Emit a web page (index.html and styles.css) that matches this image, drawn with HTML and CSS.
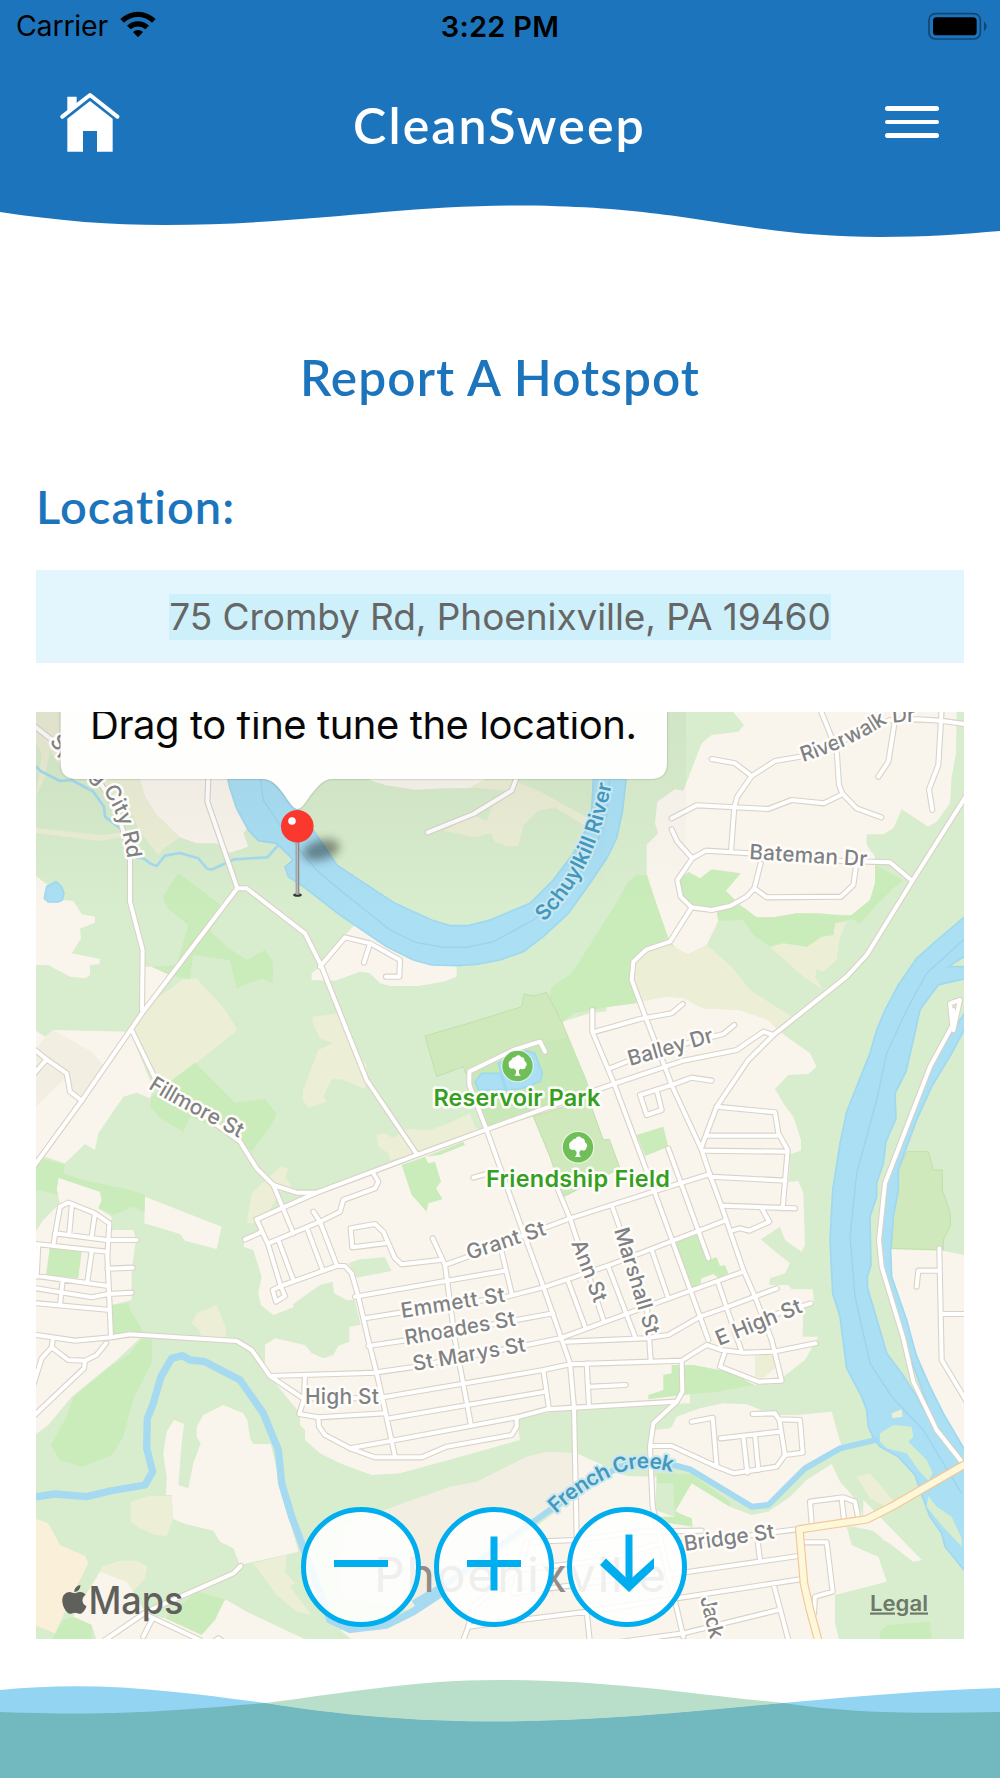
FILE: index.html
```html
<!DOCTYPE html>
<html lang="en">
<head>
<meta charset="utf-8">
<title>CleanSweep</title>
<link rel="stylesheet" href="styles.css">
</head>
<body>
<header class="header">
  <svg class="header-wave" viewBox="0 0 1000 240" aria-hidden="true"><path d="M0 0H1000V231C965 234 925 237 880 237C740 237 690 205.5 515 205.5C400 205.5 300 225 165 225C110 225 60 221 0 212Z"/></svg>
  <div class="header-content">
    <div class="status">
      <div class="status-left"><span class="carrier">Carrier</span>
        <svg class="wifi" width="38" height="28" viewBox="0 0 114 84"><path d="M4 24A76 76 0 0 1 110 24L99 35A60 60 0 0 0 15 35ZM24 44A48 48 0 0 1 90 44L79 55A32 32 0 0 0 35 55ZM42 63A22 22 0 0 1 72 63L57 79Z"/></svg>
      </div>
      <span class="time">3:22 PM</span>
      <svg class="battery" width="60" height="28" viewBox="0 0 180 84"><rect x="6" y="5" width="154" height="76" rx="19" fill="none" stroke="#12466f" stroke-width="5"/><rect x="18" y="16" width="131" height="54" rx="11"/><path d="M171 28Q187 43 171 58Z" fill="#12466f"/></svg>
    </div>
    <nav class="nav">
      <svg class="home" width="60" height="62" viewBox="0 0 180 186"><path d="M22 83L90 30L158 83V182H111V120H69V182H22Z"/><path d="M22 17H50V38L22 62Z"/><path d="M7 77L90 12L172 77" fill="none" stroke="#fff" stroke-width="12" stroke-linecap="round" stroke-linejoin="round"/></svg>
      <h1 class="brand">CleanSweep</h1>
      <div class="menu"><i></i><i></i><i></i></div>
    </nav>
  </div>
</header>
<main class="main">
  <h2 class="title">Report A Hotspot</h2>
  <h3 class="label">Location:</h3>
  <div class="address"><span class="selected">75 Cromby Rd, Phoenixville, PA 19460</span></div>
  <section class="map">
  <svg class="map-canvas" viewBox="36 712 928 927">
    <defs>
      <linearGradient id="shade" x1="0" y1="0" x2="0" y2="1"><stop offset="0" stop-opacity=".055"/><stop offset="1" stop-opacity="0"/></linearGradient>
      <filter id="soft" x="-50%" y="-50%" width="200%" height="200%"><feGaussianBlur stdDeviation="5"/></filter>
      <filter id="edge" x="-10%" y="-30%" width="120%" height="160%"><feGaussianBlur stdDeviation="1.2"/></filter>
      <g id="tree"><circle r="16.3" fill="#fff" opacity=".6"/><circle r="15.2" fill="#6fbe57"/><path fill="#fff" d="M-3.6 9.8C-1.8 8.9-1.5 8-1.4 4.5L-3.8 2.2C-6 3.6-9.4 1.6-8.6-1C-9.8-4-7-6-6-6C-5.5-8.5-3.2-9-2.3-8.5C-1.5-11.5 2.5-11.5 3.6-9C6.5-9 7.2-6.5 6.8-5C9.6-4 9.8-.6 8.2.6C8.2 3.4 4.5 4 3.2 2.4L1.4 4.6C1.5 8 1.8 8.9 3.8 9.8Z"/></g>
      <g id="roads">
        <g transform="translate(30 700) scale(.33333)">
          <path d="M535 200V236L532 305L622 565H650L825 700L875 800L950 990L1010 1140L1160 1362M0 68L60 115L200 230L260 330L300 460V605L338 750L336 930M622 565L336 940L155 1202L0 1415M870 800L945 712L1020 730L1110 780L1108 830H1068M1020 730L1002 788"/>
          <path d="M1193 397L1330 342L1445 272L1465 220"/>
        </g>
        <g transform="translate(640 700) scale(.33333)">
          <path d="M215 177L285 190L335 228M480 170L405 183L335 228L292 290L283 320L273 455M480 170L590 130L750 60L830 58L903 62L980 73M95 355L170 316L385 327L455 300L552 310L608 282M540 26L590 150L597 255L608 282L650 325L724 352M95 388L112 425L157 475L197 452L330 460L500 480L750 487L817 543M157 475L112 540L122 590L155 622L90 725L20 748L-20 785L-25 840L18 955L75 1102L95 1155L185 1350L210 1425L245 1520L310 1710L345 1790L395 1920"/>
          <path d="M155 622L215 630L270 618L320 590L343 565L380 592L603 590L640 555L648 500M343 565L362 490M980 285L817 543L680 765L620 830L400 1005L325 1080L230 1220L185 1340M905 26L895 195L867 268L877 330M765 60L745 185L715 230M-143 930V995L-80 1145L45 1480L180 1850L205 1920M-135 995L0 957L95 940L128 912M938 985L930 910L960 900L940 990"/>
        </g>
        <g transform="translate(30 1010) scale(.33333)">
          <path d="M0 108L50 148L110 190L120 245L155 272M50 148L0 205M305 60L380 215L630 395L680 475L730 525L757 590L790 670M730 525L800 548H860M680 628L715 705L752 828M715 700L870 635L930 605L940 570L1035 535L1045 515L1030 490M850 605L870 635L920 765M745 690L790 810M833 660L878 780M752 828L920 768H945L965 790L985 860L1015 990M752 828L765 858L738 875L728 840ZM962 655L967 712L1065 700M962 655L1035 642L1060 665L1095 745L1115 763L1230 750"/>
          <path d="M70 705L90 590L115 578L195 610L238 640L232 740L243 980M125 590L118 670M195 610L185 680M75 670L230 690H320M0 700L230 725M25 705L20 800M185 725L172 815M0 795L235 828M98 810L90 885M0 832L185 862L235 852L305 848M232 776L308 773M0 878L240 900"/>
        </g>
        <g transform="translate(340 1010) scale(.33333)">
          <path d="M-285 688L-240 668M-250 628L-70 548L0 522L230 435L440 358L820 222L1030 152L1190 120L1270 65L1300 75M615 125L600 95L520 120L388 185V225L440 360L540 640L610 830L690 1060L702 1193L710 1580M810 175L860 155L1000 110L1150 72L1183 45M278 685L315 765L345 990L392 1240M315 765L370 745L690 625L940 545L1110 492M650 530L690 625L790 930M685 815L735 950M400 503L445 490M815 585L870 740L920 880L932 1050M805 770L885 980M485 725L515 850"/>
          <path d="M45 860L495 782M75 925L180 908L500 860L610 832L810 765L1155 632M85 1008L190 992L640 910M110 1087L215 1072L560 1005L660 985L960 875L1210 785M680 995L915 985L985 975L1080 920L1165 890L1310 835M130 1162L610 1080L690 1063L1025 1052L1100 1005L1145 1020L1210 1028L1300 1025L1427 1000M150 1225L615 1145M30 1315L155 1292L530 1222L620 1198L702 1193L1005 1175M610 1080L627 1198M740 1060L747 1188M750 1130L857 1125M85 990L110 1090L135 1200L165 1340"/>
        </g>
        <g transform="translate(640 1010) scale(.33333)">
          <path d="M230 290L405 307L415 370L443 420L428 595M200 377H415M190 422L443 425M210 500L437 512M245 587L465 595M365 595L388 635L328 662L300 655L275 662M85 415L205 745M95 225L0 255L20 315L65 300L50 240M95 225L155 203L215 212M35 720L85 865M235 820L305 1025M395 990L425 1112L355 1115L240 1070L255 1025M400 915L512 880"/>
          <path d="M898 715L905 1050L980 1175M905 912H980M898 782H835L830 830M940 0L938 45L870 170L735 520L717 690L725 770L790 985L820 1115L890 1260L965 1355"/>
        </g>
        <g transform="translate(30 1310) scale(.33333)">
          <path d="M0 72L135 92L243 82L300 73L620 93L665 120L720 198L815 262M720 198L1040 188M68 92L65 112L115 150L165 152L200 135L228 100M165 152L162 175L0 328M65 112L35 145L10 225M825 198L822 265L808 312L865 322L1065 310M865 322L867 350L885 375L960 415L1035 442H1175L1250 410L1445 375L1460 350V325M822 265H1060M225 990L350 905L610 790L632 768M350 915L510 990M365 930L340 980M545 1000L565 985L585 1000"/>
        </g>
        <g transform="translate(640 1310) scale(.33333)">
          <path d="M125 153L127 245L110 275L40 340L30 410L38 590L130 980M30 408H95L230 470L282 490L410 470L435 435L418 330L405 310L338 312M418 328L480 330L488 428L435 435M155 335L218 323L230 470M242 385L418 365M310 380L322 488M345 375L355 480"/>
          <path d="M-320 695L-190 690L0 665L185 662M130 700L300 680L470 658M350 670L360 750M80 795L475 738M-515 950L-160 905L110 865L480 808M400 820L445 990M-90 1000L130 970L415 900M490 697H560L578 845L525 860L522 910M515 640L510 575L610 562L645 575L655 625M605 565L612 630M-530 990L-515 950L-500 890L-370 780L-100 750L60 700M-160 905L-150 1000M195 860L205 940M-340 695L-380 850L60 790"/>
        </g>
      </g>
      <path id="p-spring" d="M49 742L58 752C84 770 103 784 115 812Q123 828 127 856L128 880"/>
      <path id="p-schuyl" d="M544 922Q592 875 608 800Q614 780 615 755"/>
      <path id="p-river" d="M803 762Q850 747 884 725Q900 720 935 723"/>
      <path id="p-fill" d="M148 1088Q165 1099 188 1111L250 1144"/>
      <path id="p-french" d="M556 1514Q590 1482 628 1470Q650 1464 690 1477"/>
    </defs>

    <rect x="36" y="712" width="928" height="927" fill="#d8edcd"/>
    <!-- built-up land -->
    <g class="land">
      <g transform="translate(30 700) scale(.33333)">
        <path d="M330 240V30H590V240L615 320L655 380L640 400L655 440L600 458L560 430H500L450 412L380 345L345 290ZM0 515L45 548L100 600L130 603L155 643L195 650V668L150 686L153 715L125 760L210 777L208 793L180 795V825L165 835L120 830L55 795H0Z"/>
        <path d="M1020 36H1460L1375 244L1325 264L1240 265L1155 269L1065 255L1020 240ZM845 820L870 800L945 705L980 670L1070 740L1150 780L1205 795L1280 797V830L1240 845L1165 858H1080L1050 850L1020 820L990 815L915 842L845 840ZM345 800H365L420 825L345 925Z"/>
      </g>
      <path transform="translate(640 700) scale(.33333)" d="M275 30L312 75L295 95L215 105L185 130L130 272L105 268L52 305L45 370L55 400L20 435V520L50 620L85 715L115 755L145 762L200 735L235 662L230 640L300 615L350 652H400L470 640L635 645L690 600L705 550V470L680 435V403H730L760 385L785 328L865 380L890 365L930 310L935 230L948 160L950 30Z"/>
      <g transform="translate(30 1010) scale(.33333)">
        <path d="M0 50L45 80L70 60L300 65L370 235L360 265L320 248L280 260L205 370L195 420L165 402L105 460L45 440L0 470ZM85 503L210 545L215 570L205 595L245 620L240 660H310L318 690L305 780V870L245 885L245 980L330 985L260 1050L125 1160L55 1245L0 1285V690L40 630L90 580L80 540ZM345 560L575 650L560 717L465 692L450 672L343 640Z"/>
        <path d="M680 625L860 555L990 505L1100 500V1000L1000 940L990 870L950 870L912 850L908 815L870 825L790 882V892L730 915L693 885L685 850L695 800L670 720L640 710L645 690L690 665Z"/>
      </g>
      <path transform="translate(340 1010) scale(.33333)" d="M0 525L230 435L440 360L580 320L740 250V215L665 35L750 10L830 0L900 -40H1050V1180L700 1195L530 1225L540 1290L380 1335L180 1390L95 1395L0 1360L-60 1330L-105 1290V1260L-120 1245V1210L-210 1100L-225 1095V1005L-195 985L-105 1005L-85 1030L-50 1045L-20 1035L-5 1008L28 995V950L62 945L45 870L0 860Z"/>
      <g transform="translate(640 1010) scale(.33333)">
        <path d="M-100 -25L0 -30L80 -40L130 -35L190 -5L300 0L385 30L410 55L440 80L510 130L530 170L505 192L445 195L405 237L430 280L460 320L483 390V422L450 432L447 515L475 513L490 550L495 705L485 725L435 690L420 650L362 688L400 720L450 760L435 790L390 805L388 825L445 825L455 838H518L522 880L490 885L488 980H535L495 1050L430 1100L345 1125L240 1080L130 1060L95 1065V1090L70 1095V1140L25 1155V1180L-100 1182Z"/>
        <path d="M752 718L910 722L980 737V1330L910 1210L870 1130L815 990L755 800Z"/>
      </g>
      <g transform="translate(30 1310) scale(.33333)">
        <path d="M500 350L520 315L580 285L640 310L652 330L660 385L670 402H722L755 540L805 725L630 765L610 715L570 695L550 662L460 640L425 625V555H408L410 500L400 430L410 365L432 330L462 342L455 400L445 525L475 535L490 460L512 400L500 380ZM210 785L290 805L310 845L345 905L400 925L590 870L650 905L830 990H200L185 945L130 920L170 850Z"/>
      </g>
      <g transform="translate(640 1310) scale(.33333)">
        <path fill="#f2efe2" d="M-740 590L-570 530L-490 515L-340 440L-280 425L-185 430V560L-300 620L-600 850L-700 900L-900 860L-890 650Z"/>
        <path d="M-900 960L-680 915L-560 830L-190 560V430L-40 498L50 500L45 600L160 640L105 600L155 520L270 590L335 615L385 605L450 560L500 510L575 462L600 515L640 560L670 620L705 660L730 690L845 750L820 755L715 665L640 650H620L635 705L690 730L715 740L740 815L585 855V940L600 1000H-850Z"/>
        <path d="M95 350L110 320L180 295L250 280L320 283L400 315L470 315L575 305L605 410L495 475L440 530L385 585H335L150 478L30 440V400L45 360L90 355ZM670 570L700 600L845 750L820 755L670 640Z"/>
      </g>
    </g>
    <path fill="#f2efe2" transform="translate(30 1010) scale(.33333)" d="M70 60L185 125L220 165L150 270L100 210L18 290V120L45 80Z"/>
    <!-- fields -->
    <g class="field">
      <path transform="translate(30 700) scale(.33333)" d="M0 36H90V200L60 150L45 230L18 290L35 160L0 100ZM130 36H330V240L345 290L380 345L450 412L395 450L385 465L330 395L300 330L200 240ZM0 383L210 405L275 398V410L210 423L0 397ZM340 925L460 838L500 835L530 870L570 910L595 945L622 990L500 1088L420 1145L380 1150L305 985Z"/>
      <path transform="translate(340 700) scale(.33333)" d="M520 36V240L610 280L750 358L740 380L645 322L595 332L550 375L535 438H500L465 425L452 400L405 412L310 392L400 345L440 362L460 310L500 272L390 262L450 230Z"/>
      <path transform="translate(640 700) scale(.33333)" d="M-20 785L20 750L90 735L145 762L200 735L275 800L330 870L455 950L410 985L385 960L300 930L190 925L130 895L80 890L0 905L-10 910L-25 840ZM390 740L415 725L500 740L545 710L580 705L585 670L620 665L600 710L590 780L550 815L530 808L525 830L550 870L490 830Z"/>
      <path transform="translate(30 1010) scale(.33333)" d="M665 550L685 530L755 468L775 478L765 500L785 530L750 545L720 600L670 640H650ZM485 940L500 910L560 885L590 960L585 985H515L508 960ZM848 20L930 10L990 140L1010 165L1005 238L935 208H905L880 260L890 275L835 293L818 270L820 240L865 120L910 100L870 85L848 40Z"/>
      <path transform="translate(340 1010) scale(.33333)" d="M110 375L130 368L160 385L200 358L270 360L325 340L390 310L405 350L420 360L235 430L150 450L145 430L115 410Z"/>
      <path transform="translate(30 1310) scale(.33333)" d="M302 575L360 557L425 558L430 625L410 678L375 675L330 655L302 635ZM215 770L270 752H320L352 768L345 805L310 845L290 815L210 785ZM670 760L770 735L765 785L795 820L780 830L845 915L800 905L740 855Z"/>
      <path fill="#faf0da" transform="translate(30 1310) scale(.33333)" d="M0 620L55 640L90 705L165 738L175 760L130 850L75 970L0 940Z"/>
      <path transform="translate(640 1310) scale(.33333)" d="M650 500L690 490L775 590L745 595L690 565ZM345 135L395 130L410 170L370 205L345 200Z"/>
    </g>
    <!-- woods and parks -->
    <g class="wood">
      <path transform="translate(30 700) scale(.33333)" d="M445 520L585 625L540 692L590 740L650 780L705 750L728 785V850L695 835L620 865L600 780L490 765L480 838L420 825L365 800L440 795L475 675L415 628L398 590Z"/>
      <path transform="translate(340 700) scale(.33333)" d="M825 615L865 545L890 525H920L985 715L915 745L880 785L875 840L890 910L810 920L700 940L665 970L630 890L635 860L695 820L740 750Z"/>
      <path transform="translate(640 700) scale(.33333)" d="M145 515L180 535L215 508L302 520L258 572L300 615L215 628L160 620L118 580L112 545ZM300 615L350 652H400L470 640L540 640L600 648L635 645L690 600L705 550V495L790 540L765 560L715 610L660 670L635 657L585 670L580 705L545 710L500 740L430 730L390 740L340 705L310 660L235 662L230 635Z"/>
      <path transform="translate(30 1010) scale(.33333)" d="M420 215L495 158L615 278L705 267L740 312L720 350L665 425L620 380L480 320L460 365L390 325L360 290L365 260ZM60 710L155 725L145 805L48 795ZM0 435L105 465L100 490L160 510L300 540L345 555L343 605L310 590L250 615L205 595L215 570L210 545L85 503L80 540L85 555L0 535ZM245 885L295 880L300 900L340 965L245 980Z"/>
      <path transform="translate(340 1010) scale(.33333)" d="M185 465L255 440L265 460L285 455L303 515L288 535L308 568L265 580L260 605L215 555ZM255 440L370 395L375 405L300 435ZM890 375L970 350L985 410L915 438ZM1005 695L1070 675L1105 750L1130 742L1140 768L1155 765L1165 790L1135 805L1120 792L1085 805L1080 825L1055 832Z"/>
      <path fill="#d8edcd" transform="translate(340 1010) scale(.33333)" d="M25 760L60 748L135 742L155 783L50 803Z"/>
      <path transform="translate(30 1310) scale(.33333)" d="M335 88H365V160L310 265L280 380L245 435L155 470L90 450L62 405L110 320L130 262L240 170L300 130ZM405 925L500 845L585 868L555 930L515 975ZM130 920L185 945V1000H60L100 930Z"/>
      <path transform="translate(640 1310) scale(.33333)" d="M95 165L160 165L280 190L340 225L230 245L130 255L25 268V255L70 240V195L95 190ZM50 490L155 492L270 575V590L155 520L105 605L155 625L158 650L60 635L55 620H105L100 520H50ZM720 965L740 945L870 935L875 1000H720Z"/>
    </g>
    <g class="park">
      <path transform="translate(340 1010) scale(.33333)" d="M255 78L385 40L545 -10L553 -48L580 -42L620 -53L665 35L740 215L750 255L440 358L370 170L290 200Z"/>
      <path transform="translate(340 1010) scale(.33333)" d="M580 320L745 265L790 390L808 388L840 475L670 560L630 440Z"/>
      <path transform="translate(640 1010) scale(.33333)" d="M800 425H865L880 480H907V540L930 605L932 645L910 690V720L755 715L760 620L775 540V480Z"/>
    </g>
    <path transform="translate(340 1010) scale(.33333)" fill="#c9e8b7" d="M600 100L685 80L740 215L750 255L440 358L390 225L390 190Z"/>
    <!-- water -->
    <g class="water">
      <path transform="translate(30 700) scale(.33333)" d="M580 36L595 240L600 265L622 330L655 390L685 422L740 430L790 480L765 500L775 530L820 560L930 645L1070 740L1150 780L1205 795L1280 797L1340 793L1410 780L1480 755L1540 710L1615 640L1680 550L1730 475L1760 415L1778 330L1788 240L1800 36H1705L1690 240L1685 330L1670 385L1630 460L1570 540L1500 610L1380 660L1315 677H1260L1205 660L1095 610L920 495L870 420L800 320L720 240L660 36ZM78 545L95 560L102 580L97 600L85 606H55L43 595L50 560Z"/>
      <path transform="translate(340 1010) scale(.33333)" d="M405 215L425 190H480L495 240H415ZM475 160L560 122L585 130L607 190L600 215L545 235L500 240Z"/>
      <path transform="translate(640 1010) scale(.33333)" d="M980 -285L880 -200L830 -155L775 -75L735 0L710 60L690 130L620 305L600 400L578 540L570 690L578 850L600 920L605 960L620 1075L665 1160L680 1200L685 1250L700 1285L720 1310L775 1340L825 1395L845 1455L870 1520L905 1570L915 1610L980 1690V1340L880 1250L830 1160L785 1090L740 1030L720 960L683 835L682 800L693 765L690 620L710 560V520L730 460L738 395L768 325L765 250L798 185L820 90L840 0L850 -15L895 -75L980 -95V-130L925 -130L980 -165Z"/>
      <path transform="translate(640 1010) scale(.33333)" d="M980 0L940 60L870 170L740 520L722 690L730 780L790 985L890 1260L980 1365V1330L910 1210L870 1130L830 1040L812 975L800 930L755 800L752 720L760 620L775 540V480L800 410L830 330L875 230L935 130L980 45Z"/>
      <path class="creek creek-thin" transform="translate(30 700) scale(.33333)" d="M0 185L35 215L90 243L125 240L190 275L222 320L225 350L275 388L310 470L340 475L365 493L380 498L405 467L450 459L505 475L532 507L548 508L612 478L712 472L745 435"/>
      <path class="creek creek-wide" transform="translate(30 1310) scale(.33333)" d="M0 563L75 552L170 560L240 543L345 525L368 485L350 415L352 325L370 280L393 200L425 145L458 137L480 150L525 155L630 210L700 310L745 420L755 520L785 620L830 740L900 930L960 958L1070 945L1150 905L1250 840"/>
      <path class="creek creek-mid" transform="translate(640 1310) scale(.33333)" d="M-680 880L-580 820L-270 600L-150 520L-60 470L0 455L100 465L150 478L335 590L385 585L440 530L495 475L600 415L715 388"/>
    </g>
    <g fill="none" stroke="#9bd3ec" stroke-width="3.5">
      <path transform="translate(30 700) scale(.33333)" d="M665 40L700 300L760 390L860 510L930 570L1080 690L1160 728L1240 742H1310L1390 725L1510 660L1600 590L1690 460L1730 350L1750 100"/>
      <path transform="translate(640 1010) scale(.33333)" d="M970 -210L860 -110L800 0L740 130L710 270L650 490L630 680L645 860L690 1060L755 1160L850 1260L965 1450"/>
    </g>
    <path fill="#d8edcd" transform="translate(640 1310) scale(.33333)" d="M720 370L760 345L815 350L820 380L805 395L840 430L860 450L878 490L865 512L835 480L800 430L740 415L720 395ZM865 558L890 590L935 620L965 685V710L900 640L860 590Z"/>
    <path class="field" transform="translate(640 1310) scale(.33333)" d="M755 310L785 298L788 320L757 325Z"/>
    <!-- roads -->
    <use href="#roads" class="casing"/><use href="#roads" class="road"/>
    <g transform="translate(640 1310) scale(.33333)" fill="none" stroke-linejoin="round"><path d="M540 1010L510 900L492 820L478 658L680 628L755 590L980 460" stroke="#f3c898" stroke-width="26"/><path d="M540 1010L510 900L492 820L478 658L680 628L755 590L980 460" stroke="#fdf8d9" stroke-width="19"/></g>
    <rect x="36" y="712" width="570" height="200" fill="url(#shade)"/>
    <rect x="606" y="712" width="80" height="200" fill="url(#shade)" opacity=".6"/>
    <!-- labels -->
    <g class="street">
      <text><textPath href="#p-spring" textLength="146">Spring City Rd</textPath></text>
      <text><textPath href="#p-river" textLength="121">Riverwalk Dr</textPath></text>
      <text><textPath href="#p-fill" textLength="104">Fillmore St</textPath></text>
      <text transform="translate(749 859) rotate(3.5)" textLength="118">Bateman Dr</text>
      <text transform="translate(630 1066) rotate(-16)" textLength="88">Balley Dr</text>
      <text transform="translate(469 1260) rotate(-18)" textLength="82">Grant St</text>
      <text transform="translate(571 1243) rotate(69)" textLength="65">Ann St</text>
      <text transform="translate(614 1230) rotate(73)" textLength="111">Marshall St</text>
      <text transform="translate(402 1318) rotate(-9)" textLength="105">Emmett St</text>
      <text transform="translate(406 1345) rotate(-10)" textLength="112">Rhoades St</text>
      <text transform="translate(414 1371) rotate(-10)" textLength="114">St Marys St</text>
      <text transform="translate(305 1404)" textLength="74">High St</text>
      <text transform="translate(719 1346) rotate(-22)" textLength="91">E High St</text>
      <text transform="translate(685 1551) rotate(-8)" textLength="91">Bridge St</text>
      <text transform="translate(700 1598) rotate(76)" textLength="43">Jack</text>
    </g>
    <g class="river">
      <text><textPath href="#p-schuyl" textLength="156">Schuylkill River</textPath></text>
      <text><textPath href="#p-french" textLength="130">French Creek</textPath></text>
    </g>
    <use href="#tree" x="517.5" y="1066"/><use href="#tree" x="578" y="1147.3"/>
    <g class="poi"><text x="433.500" y="1105.500" textLength="167">Reservoir Park</text><text x="486" y="1187" textLength="184">Friendship Field</text></g>
    <text class="city" x="374" y="1592" textLength="292">Phoenixville</text>
    <!-- attribution -->
    <g fill="#5f605b"><path transform="translate(62 1583) scale(.0643)" d="M318.7 268.7c-.2-36.7 16.4-64.4 50-84.8-18.8-26.9-47.2-41.7-84.7-44.6-35.5-2.8-74.3 20.7-88.5 20.7-15 0-49.4-19.7-76.4-19.7C63.3 141.2 4 184.8 4 273.5q0 39.3 14.4 81.2c12.8 36.7 59 126.7 107.2 125.2 25.2-.6 43-17.9 75.8-17.9 31.8 0 48.3 17.9 76.4 17.9 48.6-.7 90.4-82.5 102.6-119.3-65.2-30.7-61.7-90-61.7-91.9zm-56.6-164.2c27.3-32.4 24.8-61.9 24-72.5-24.1 1.4-52 16.4-67.9 34.9-17.5 19.8-27.8 44.3-25.6 71.9 26.1 2 49.9-11.4 69.5-34.3z"/><text class="maps" x="88.500" y="1614" textLength="95" lengthAdjust="spacingAndGlyphs">Maps</text></g>
    <text class="legal" x="870" y="1610.500" textLength="58" lengthAdjust="spacingAndGlyphs">Legal</text>
    <!-- pin and callout -->
    <ellipse cx="321" cy="850" rx="19" ry="10" fill="#000" opacity=".4" filter="url(#soft)" transform="rotate(-15 321 850)"/>
    <ellipse cx="297.500" cy="895" rx="4.300" ry="1.800" fill="#333"/><path d="M297.500 838V895" stroke="#8b8b8b" stroke-width="3.600"/><path d="M297.200 838V894" stroke="#b9b9b9" stroke-width="1.600"/>
    <path d="M60.500 700V763Q60.500 779 76.500 779H262C272 779 278 786 285 796C291 805 294 809 297.500 809S304 805 310 796C318 786 323 779 333 779H651Q667 779 667 763V700Z" fill="#000" opacity=".28" filter="url(#edge)"/>
    <path d="M60.500 700V763Q60.500 779 76.500 779H262C272 779 278 786 285 796C291 805 294 809 297.500 809S304 805 310 796C318 786 323 779 333 779H651Q667 779 667 763V700Z" fill="#fefefd"/>
    <circle cx="297.300" cy="826.200" r="16.300" fill="#fb382d"/><circle cx="292" cy="821" r="3.800" fill="#fff"/>
    <text class="tip" x="90" y="739" textLength="547">Drag to fine tune the location.</text>
  </svg>
  <div class="controls">
    <button class="control" aria-label="Zoom out"><svg viewBox="0 0 120 120"><path d="M33 56.500H87"/></svg></button>
    <button class="control" aria-label="Zoom in"><svg viewBox="0 0 120 120"><path d="M33 56.500H87M60 29.500V83.500"/></svg></button>
    <button class="control" aria-label="Go to location"><svg viewBox="0 0 120 120"><path d="M62 27.500V79"/><path fill="#00aeef" stroke="none" d="M33 58L39 51.500L62 73.500L87 51V61.500L62 85Z"/></svg></button>
  </div>
  </section>
</main>
<svg class="footer" viewBox="0 1675 1000 103" aria-hidden="true">
  <defs><clipPath id="greenClip"><path d="M0 1712C130 1717 200 1708 265 1703C340 1694 410 1680 500 1680C610 1680 690 1694 783 1703C850 1713 910 1714 1000 1712V1778H0Z"/></clipPath></defs>
  <path fill="#92d4f2" d="M0 1690C100 1680 180 1692 265 1703C340 1715 410 1721.500 500 1721.500C590 1721.500 690 1712 783 1703C860 1696 930 1690 1000 1688V1778H0Z"/>
  <path fill="#b9dec9" d="M265 1703C340 1694 410 1680 500 1680C610 1680 690 1694 783 1703C690 1712 590 1721.500 500 1721.500C410 1721.500 340 1715 265 1703Z"/>
  <path clip-path="url(#greenClip)" fill="#71b8bf" d="M0 1690C100 1680 180 1692 265 1703C340 1715 410 1721.500 500 1721.500C590 1721.500 690 1712 783 1703C860 1696 930 1690 1000 1688V1778H0Z"/>
</svg>
</body>
</html>
```
FILE: styles.css
```css
* { box-sizing: border-box; }
body { margin: 0; width: 1000px; height: 1778px; display: flex; flex-direction: column; background: #fff; font-family: Inter, "Liberation Sans", sans-serif; overflow: hidden; }
h1, h2, h3 { margin: 0; font-family: Lato, "Open Sans", sans-serif; font-weight: 600; }
.header { display: grid; height: 240px; flex: none; }
.header > * { grid-area: 1 / 1; }
.header-wave { width: 1000px; height: 240px; fill: #1c75bc; }
.header-content { display: flex; flex-direction: column; min-width: 0; }
.status { display: grid; grid-template-columns: 1fr auto 1fr; align-items: center; height: 50px; padding: 0 13px 0 16px; font-size: 28.5px; line-height: 50px; color: #000; }
.status-left { display: flex; align-items: center; gap: 11px; }
.carrier { letter-spacing: -.2px; }
.wifi { margin-top: -3px; }
.time { font-weight: 600; font-size: 29px; letter-spacing: .25px; margin-right: 3px; margin-top: 2px; }
.battery { justify-self: end; margin-top: -1px; }
.nav { display: grid; grid-template-columns: 1fr auto 1fr; align-items: start; padding: 41px 61px 0 60px; color: #fff; }
.home { fill: #fff; }
.brand { font-size: 50px; line-height: 58px; margin-top: 5px; letter-spacing: 2.1px; white-space: nowrap; }
.menu { justify-self: end; display: flex; flex-direction: column; gap: 9px; margin-top: 15px; }
.menu i { display: block; width: 54px; height: 4.7px; border-radius: 3px; background: #fff; }
.main { padding: 0 36px; display: flex; flex-direction: column; flex: none; color: #1c75bc; }
.title { margin-top: 107px; height: 60px; line-height: 60px; font-size: 49.5px; text-align: center; letter-spacing: 1.1px; }
.label { margin: 69px 0 0; height: 60px; line-height: 60px; font-size: 47px; letter-spacing: 1.1px; }
.address { margin-top: 34px; height: 93px; background: #e3f6fd; display: flex; align-items: center; justify-content: center; color: #666; font-size: 37px; }
.selected { background: #cdf0fa; line-height: 46px; white-space: nowrap; letter-spacing: -.08px; }
.map { margin-top: 49px; width: 928px; height: 927px; position: relative; overflow: hidden; }
.map-canvas { display: block; width: 928px; height: 927px; }
.land { fill: #f9f5ed; }
.field { fill: #eceed6; }
.wood { fill: #caebba; }
.park { fill: #cfe9bd; stroke: #c0e0aa; stroke-width: 3; }
.water { fill: #aadff4; stroke: #a0d8ef; stroke-width: 5; }
.water .creek { fill: none; stroke: #a5daf0; stroke-linejoin: round; }
.water .creek-thin { stroke-width: 8; }
.water .creek-mid { stroke-width: 18; }
.water .creek-wide { stroke-width: 22; }
.casing, .road { fill: none; stroke-linecap: round; stroke-linejoin: round; }
.casing { stroke: #d9d2c7; stroke-width: 18.5; }
.road { stroke: #fff; stroke-width: 12; }
.street, .river, .poi { paint-order: stroke; stroke-linejoin: round; stroke: #fffdf9; stroke-width: 5px; }
.street { fill: #808184; font-size: 21px; font-weight: 500; }
.river { fill: #4598bd; font-size: 21px; font-weight: 600; stroke: #c9e8f1; stroke-width: 4px; }
.poi { fill: #35a01f; font-size: 23.5px; font-weight: 600; }
.city { fill: #918c88; font-size: 48px; }
.maps { font-size: 38px; font-weight: 500; }
.legal { font-size: 21.5px; font-weight: 600; fill: #6d786a; text-decoration: underline; }
.tip { font-size: 40px; fill: #080808; }
.controls { position: absolute; left: 265px; bottom: 12.5px; display: flex; gap: 13px; }
.control { width: 120px; height: 120px; padding: 0; border: 5px solid #00aeef; border-radius: 50%; background: rgba(255,255,255,.86); }
.control svg { display: block; width: 120px; height: 120px; margin: -5px; fill: none; stroke: #00aeef; stroke-width: 7; }
.footer { display: block; width: 1000px; height: 103px; margin-top: auto; flex: none; }
```
